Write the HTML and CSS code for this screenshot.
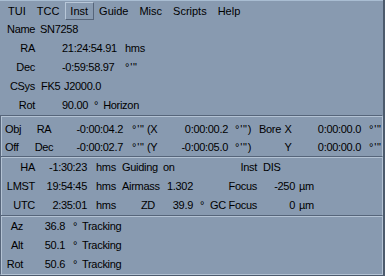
FILE: index.html
```html
<!DOCTYPE html>
<html>
<head>
<meta charset="utf-8">
<link rel="stylesheet" href="styles.css">
</head>
<body>
<div class="win">
  <div class="menubar">
    <span class="mi">TUI</span>
    <span class="mi">TCC</span>
    <span class="mi act">Inst</span>
    <span class="mi">Guide</span>
    <span class="mi">Misc</span>
    <span class="mi">Scripts</span>
    <span class="mi">Help</span>
  </div>

  <div class="sec top">
    <div class="row">
      <span class="name">Name</span><span class="c34 nm">SN7258</span>
    </div>
    <div class="row">
      <span class="lbl">RA</span><span class="c4">21:24:54.91</span><span class="c5">hms</span>
    </div>
    <div class="row">
      <span class="lbl">Dec</span><span class="c4">-0:59:58.97</span><span class="c5 u">°'"</span>
    </div>
    <div class="row">
      <span class="lbl">CSys</span><span class="c3">FK5</span><span class="c4 pl2">J2000.0</span>
    </div>
    <div class="row">
      <span class="lbl">Rot</span><span class="c45">90.00<span class="deg">°</span><span class="hz">Horizon</span></span>
    </div>
  </div>

  <div class="sec frame obj">
    <div class="row">
      <span class="pl4">Obj</span><span class="c">RA</span><span class="r">-0:00:04.2</span><span class="pl8 u">°'"</span><span class="pl2">(X</span><span class="r">0:00:00.2</span><span class="pl6 u">°'")</span><span class="pl2">Bore</span><span class="c">X</span><span class="r">0:00:00.0</span><span class="pl7 u">°'"</span>
    </div>
    <div class="row">
      <span class="pl4">Off</span><span class="c">Dec</span><span class="r">-0:00:02.7</span><span class="pl8 u">°'"</span><span class="pl2">(Y</span><span class="r">-0:00:05.0</span><span class="pl6 u">°'")</span><span></span><span class="c">Y</span><span class="r">0:00:00.0</span><span class="pl7 u">°'"</span>
    </div>
  </div>

  <div class="sec frame ha">
    <div class="row">
      <span class="r">HA</span><span class="r">-1:30:23</span><span class="pl8">hms</span><span class="pl4">Guiding</span><span class="pl7">on</span><span></span><span class="r">Inst</span><span class="pl5">DIS</span><span></span>
    </div>
    <div class="row">
      <span class="r">LMST</span><span class="r">19:54:45</span><span class="pl8">hms</span><span class="pl4">Airmass</span><span class="r">1.302</span><span></span><span class="r">Focus</span><span class="r">-250</span><span class="pl3">µm</span>
    </div>
    <div class="row">
      <span class="r">UTC</span><span class="r">2:35:01</span><span class="pl8">hms</span><span class="r">ZD</span><span class="r">39.9</span><span class="pl6">°</span><span class="r">GC Focus</span><span class="r">0</span><span class="pl3">µm</span>
    </div>
  </div>

  <div class="sec frame az">
    <div class="row">
      <span class="r">Az</span><span class="r">36.8</span><span class="pl7">°</span><span class="pl2">Tracking</span>
    </div>
    <div class="row">
      <span class="r">Alt</span><span class="r">50.1</span><span class="pl7">°</span><span class="pl2">Tracking</span>
    </div>
    <div class="row">
      <span class="r">Rot</span><span class="r">50.6</span><span class="pl7">°</span><span class="pl2">Tracking</span>
    </div>
  </div>
</div>
</body>
</html>
```

FILE: styles.css
```css
html, body {
  margin: 0;
  padding: 0;
  background: #889ab0;
}
.win {
  width: 385px;
  height: 276px;
  box-sizing: border-box;
  background: #889ab0;
  border-right: 2px solid #4c5a6c;
  border-bottom: 1px solid #4c5a6c;
  font-family: "Liberation Sans", Arial, sans-serif;
  font-size: 11px;
  letter-spacing: -0.3px;
  color: #000;
  display: flex;
  flex-direction: column;
  overflow: hidden;
  white-space: nowrap;
}
.menubar {
  height: 20px;
  border-top: 1px solid #a9bdd2;
  display: flex;
  align-items: center;
  padding-left: 2.5px;
  letter-spacing: 0;
}
.mi {
  padding: 1px 4.5px;
  line-height: 14px;
  border: 1px solid transparent;
}
.mi.act {
  border-color: #b8c7d8 #56657a #56657a #b8c7d8;
}
.row {
  display: grid;
  align-items: center;
  line-height: 13px;
}
.top {
  height: 95px;
}
.top .row {
  height: 19px;
  grid-template-columns: 36px 5px 21px 63px 1fr;
}
.top .lbl {
  grid-column: 1;
  text-align: right;
  padding-right: 1px;
}
.top .name {
  grid-column: 1 / span 2;
  padding-left: 7px;
}
.top .c3 {
  grid-column: 3;
}
.top .c34 {
  grid-column: 3 / span 2;
}
.top .nm {
  margin-left: -1px;
}
.top .c4 {
  grid-column: 4;
}
.top .c5 {
  grid-column: 5;
}
.top .c45 {
  grid-column: 4 / span 2;
}
.u {
  letter-spacing: 0.8px;
}
.deg {
  margin-left: 6px;
}
.hz {
  margin-left: 5px;
}
.frame {
  border-top: 1px solid #56657a;
  border-left: 1px solid #56657a;
  border-right: 1px solid #b3c2d3;
  box-shadow: inset 0 1px 0 #b3c2d3, inset 1px 0 0 #b3c2d3;
}
.obj {
  padding-top: 4px;
  height: 41px;
  box-sizing: border-box;
}
.obj .row {
  height: 18px;
  grid-template-columns: 23px 40px 60px 21px 15px 69px 28px 25px 12px 68px 1fr;
}
.ha {
  padding-top: 1px;
  height: 59px;
  box-sizing: border-box;
}
.ha .row {
  height: 19px;
  grid-template-columns: 35px 52px 30px 38px 38px 11px 53px 38px 1fr;
}
.az {
  padding-top: 1px;
  flex: 1;
  border-bottom: 1px solid #b3c2d3;
}
.az .row {
  height: 19px;
  grid-template-columns: 23px 42px 14px 1fr;
}
.r {
  text-align: right;
  padding-right: 1px;
}
.c {
  text-align: center;
}
.pl2 { padding-left: 2px; }
.pl3 { padding-left: 3px; }
.pl4 { padding-left: 4px; }
.pl5 { padding-left: 5px; }
.pl6 { padding-left: 6px; }
.pl7 { padding-left: 7px; }
.pl8 { padding-left: 8px; }
```
